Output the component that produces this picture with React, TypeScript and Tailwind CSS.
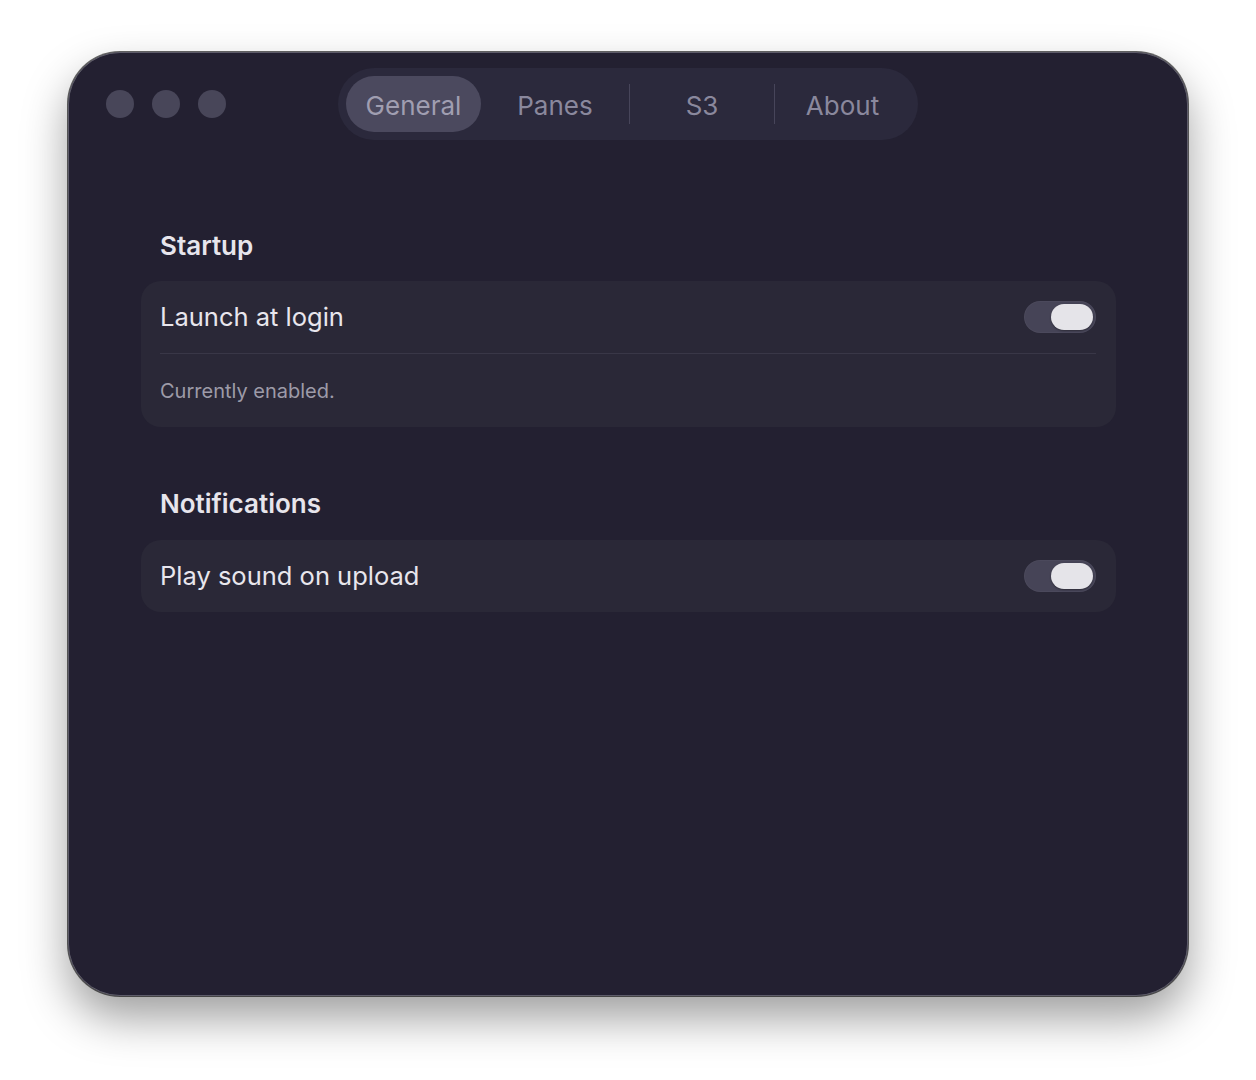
import React from "react";

function Toggle() {
  return (
    <div className="w-[72px] h-[32px] rounded-full bg-[#464457] flex items-center justify-end pr-[3px] shadow-[inset_0_0_0_1px_rgba(255,255,255,0.03)]">
      <div className="w-[42px] h-[26px] rounded-full bg-[#e5e4e9] shadow-[0_1px_2px_rgba(0,0,0,0.35)]" />
    </div>
  );
}

function Tab({ label, active, w }: { label: string; active?: boolean; w: string }) {
  return (
    <div
      className={`${w} h-[56px] flex items-center justify-center rounded-full text-[26px] pt-[2px] ${
        active ? "bg-[#4b495e] text-[#a09eb1]" : "text-[#8a889d]"
      }`}
    >
      {label}
    </div>
  );
}

export default function App() {
  return (
    <div
      className="min-h-[1080px] w-[1256px] bg-white pt-[52px] pl-[68px]"
      style={{ fontFamily: "Inter, 'Noto Sans', sans-serif" }}
    >
      <div className="w-[1120px] h-[944px] rounded-[52px] bg-[#232031] border border-[#5e5c6a] shadow-[0_22px_45px_rgba(0,0,0,0.38),0_0_0_1px_rgba(0,0,0,0.6)] overflow-hidden">
        {/* header */}
        <div className="grid grid-cols-[1fr_auto_1fr] items-center pt-[15px]">
          <div className="flex items-center gap-[18px] pl-[37px]">
            <div className="w-[28px] h-[28px] rounded-full bg-[#484659]" />
            <div className="w-[28px] h-[28px] rounded-full bg-[#484659]" />
            <div className="w-[28px] h-[28px] rounded-full bg-[#484659]" />
          </div>
          <div className="h-[72px] rounded-full bg-[#2b293c] flex items-center px-[8px]">
            <Tab label="General" active w="w-[135px]" />
            <Tab label="Panes" w="w-[148px]" />
            <div className="w-px h-[40px] bg-[#47455a]" />
            <Tab label="S3" w="w-[144px]" />
            <div className="w-px h-[40px] bg-[#47455a]" />
            <Tab label="About" w="w-[135px]" />
          </div>
          <div />
        </div>

        {/* content */}
        <div className="pl-[72px] pr-[71px] pt-[89px] flex flex-col">
          <div className="px-[19px] h-[32px] flex items-center text-[26px] font-semibold text-[#e7e5ec]">
            Startup
          </div>
          <div className="mt-[20px] rounded-[20px] bg-[#2a2837] px-[19px] pr-[20px]">
            <div className="h-[72px] flex items-center justify-between">
              <span className="text-[25.5px] text-[#e8e6ed]">Launch at login</span>
              <Toggle />
            </div>
            <div className="h-px bg-[#393747]" />
            <div className="h-[73px] flex items-center text-[20px] text-[#9d9ba8]">
              Currently enabled.
            </div>
          </div>

          <div className="mt-[60px] px-[19px] h-[32px] flex items-center text-[26px] font-semibold text-[#e7e5ec]">
            Notifications
          </div>
          <div className="mt-[21px] rounded-[20px] bg-[#2a2837] px-[19px] pr-[20px]">
            <div className="h-[72px] flex items-center justify-between">
              <span className="text-[25.5px] text-[#e8e6ed]">Play sound on upload</span>
              <Toggle />
            </div>
          </div>
        </div>
      </div>
    </div>
  );
}
